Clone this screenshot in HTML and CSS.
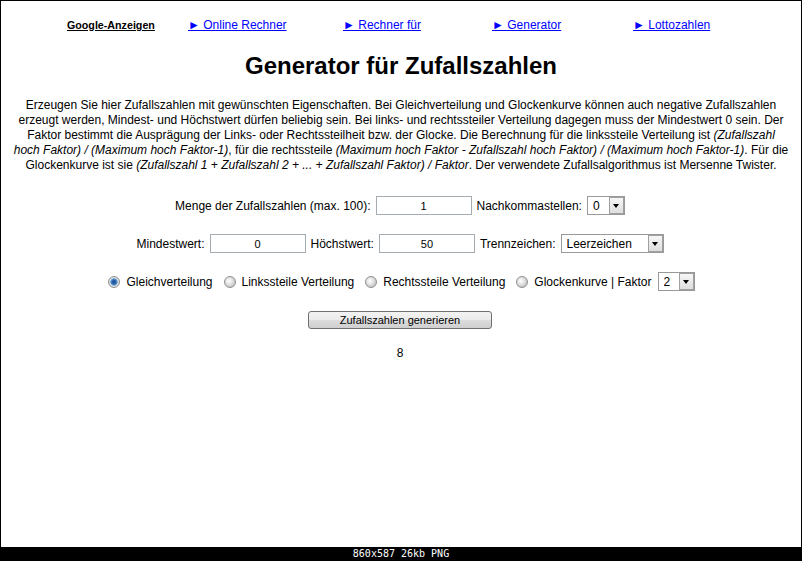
FILE: index.html
```html
<!DOCTYPE html>
<html lang="de">
<head>
    <meta charset="UTF-8">
    <meta name="viewport" content="width=device-width, initial-scale=1.0">
    <title>Generator für Zufallszahlen</title>
    <link rel="stylesheet" href="styles.css">
</head>
<body>
    <div class="shot">
        <div class="topnav">
            <a class="ads" href="#">Google-Anzeigen</a>
            <a href="#">► Online Rechner</a>
            <a href="#">► Rechner für</a>
            <a href="#">► Generator</a>
            <a href="#">► Lottozahlen</a>
        </div>

        <h1>Generator für Zufallszahlen</h1>

        <p class="intro">Erzeugen Sie hier Zufallszahlen mit gewünschten Eigenschaften. Bei Gleichverteilung und Glockenkurve können auch negative Zufallszahlen erzeugt werden, Mindest- und Höchstwert dürfen beliebig sein. Bei links- und rechtssteiler Verteilung dagegen muss der Mindestwert 0 sein. Der Faktor bestimmt die Ausprägung der Links- oder Rechtssteilheit bzw. der Glocke. Die Berechnung für die linkssteile Verteilung ist <i>(Zufallszahl hoch&nbsp;Faktor) / (Maximum hoch Faktor-1)</i>, für die rechtssteile <i>(Maximum hoch Faktor - Zufallszahl hoch Faktor) / (Maximum hoch Faktor-1)</i>. Für die Glockenkurve ist sie <i>(Zufallszahl 1 + Zufallszahl 2 + ... + Zufallszahl Faktor) / Faktor</i>. Der verwendete Zufallsalgorithmus ist Mersenne Twister.</p>

        <form class="gen">
            <div class="row">
                <label for="menge">Menge der Zufallszahlen (max. 100):</label>
                <input type="text" id="menge" value="1">
                <label for="nachkomma">Nachkommastellen:</label>
                <span class="select sel-small">
                    <select id="nachkomma">
                        <option>0</option>
                        <option>1</option>
                        <option>2</option>
                    </select>
                    <span class="arrow"></span>
                </span>
            </div>

            <div class="row">
                <label for="min">Mindestwert:</label>
                <input type="text" id="min" value="0">
                <label for="max">Höchstwert:</label>
                <input type="text" id="max" value="50">
                <label for="trenn">Trennzeichen:</label>
                <span class="select sel-wide">
                    <select id="trenn">
                        <option>Leerzeichen</option>
                        <option>Komma</option>
                        <option>Zeilenumbruch</option>
                    </select>
                    <span class="arrow"></span>
                </span>
            </div>

            <div class="row dist">
                <label class="opt"><input type="radio" name="dist" checked> Gleichverteilung</label>
                <label class="opt"><input type="radio" name="dist"> Linkssteile Verteilung</label>
                <label class="opt"><input type="radio" name="dist"> Rechtssteile Verteilung</label>
                <label class="opt"><input type="radio" name="dist"> Glockenkurve | Faktor
                    <span class="select sel-factor">
                        <select>
                            <option>2</option>
                            <option>3</option>
                            <option>4</option>
                        </select>
                        <span class="arrow"></span>
                    </span>
                </label>
            </div>

            <div class="row">
                <button type="button">Zufallszahlen generieren</button>
            </div>
        </form>

        <div class="result">8</div>
    </div>
    <div class="caption">860x587 26kb PNG</div>
</body>
</html>
```

FILE: styles.css
```css
body {
    margin: 0;
    background: #000;
    font-family: "Liberation Sans", Arial, sans-serif;
    color: #000;
}

.shot {
    background: #fff;
    margin: 1px 1px 0 1px;
    height: 546px;
    overflow: hidden;
}

.caption {
    height: 14px;
    color: #fff;
    font: 10px/14px "DejaVu Sans Mono", monospace;
    text-align: center;
}

/* top link bar */
.topnav {
    display: grid;
    grid-template-columns: 121px 155px 149px 141px 1fr;
    align-items: baseline;
    padding: 17px 0 0 66px;
    font-size: 12px;
    line-height: 15px;
}

.topnav a {
    color: #00f;
    justify-self: start;
}

.topnav .ads {
    color: #000;
    font-weight: bold;
    font-size: 10.7px;
}

h1 {
    margin: 19px 0 0;
    font-size: 24px;
    line-height: 28px;
    text-align: center;
}

.intro {
    margin: 18px 7px 0;
    font-size: 12px;
    line-height: 15px;
    text-align: center;
}

/* form */
.gen {
    display: flex;
    flex-direction: column;
    align-items: center;
    gap: 19px;
    margin: 23px 2px 0 0;
    font-size: 12px;
}

.row {
    display: flex;
    align-items: center;
    justify-content: center;
    gap: 5px;
    min-height: 19px;
}

.row.dist {
    gap: 11px;
    margin-left: 3px;
}

.row input[type="text"] {
    box-sizing: border-box;
    width: 96px;
    height: 19px;
    margin: 0;
    padding: 0;
    border: 1px solid #a5acb2;
    font: 11px "Liberation Sans", Arial, sans-serif;
    text-align: center;
    color: #000;
}

.select {
    position: relative;
    display: inline-block;
    height: 19px;
}

.select select {
    appearance: none;
    -webkit-appearance: none;
    box-sizing: border-box;
    width: 100%;
    height: 100%;
    margin: 0;
    padding: 0 0 0 5px;
    border: 1px solid #999;
    border-radius: 0;
    background: #fff;
    font: 12px "Liberation Sans", Arial, sans-serif;
    color: #000;
}

.select .arrow {
    position: absolute;
    top: 1px;
    right: 1px;
    bottom: 1px;
    width: 15px;
    box-sizing: border-box;
    border: 1px solid #a0a0a0;
    background: linear-gradient(#f6f6f6, #dedede);
    pointer-events: none;
}

.select .arrow::after {
    content: "";
    position: absolute;
    left: 3px;
    top: 6px;
    border-left: 3.5px solid transparent;
    border-right: 3.5px solid transparent;
    border-top: 4px solid #000;
}

.sel-small {
    width: 38px;
}

.sel-wide {
    width: 103px;
}

.sel-factor {
    width: 37px;
}

.opt {
    display: inline-flex;
    align-items: center;
    gap: 6px;
}

.opt input[type="radio"] {
    appearance: none;
    -webkit-appearance: none;
    width: 12px;
    height: 12px;
    margin: 0;
    border: 1px solid #8e8f8f;
    border-radius: 50%;
    background: radial-gradient(circle at 40% 40%, #fff 0, #e6e6e6 3px, #c8c8c8 6px);
}

.opt input[type="radio"]:checked {
    background: radial-gradient(circle, #1f4f8f 0, #2b64ac 2px, #79a8dc 3.5px, #e8e8e8 4px, #d2d2d2 6px);
}

button {
    width: 184px;
    height: 18px;
    padding: 0;
    border: 1px solid #707070;
    border-radius: 3px;
    background: linear-gradient(#f2f2f2 0, #ebebeb 50%, #dddddd 50%, #cfcfcf 100%);
    font: 11px "Liberation Sans", Arial, sans-serif;
    color: #000;
    cursor: pointer;
}

.result {
    margin: 17px 2px 0 0;
    font-size: 12px;
    line-height: 15px;
    text-align: center;
}
```
